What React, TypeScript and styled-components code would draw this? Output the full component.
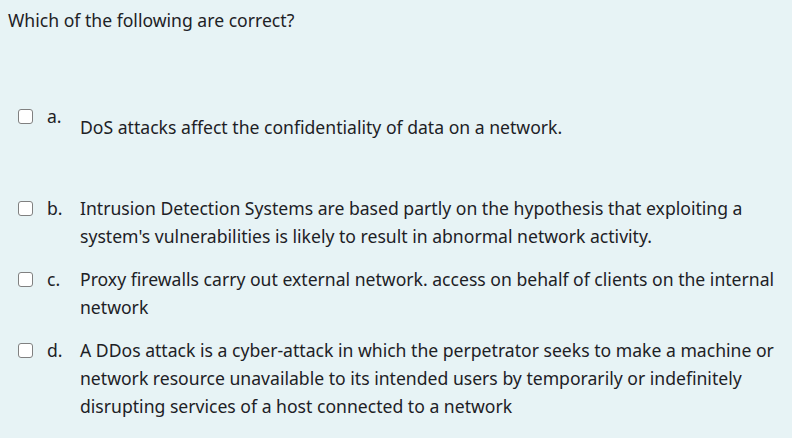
import React from "react";
import styled, { createGlobalStyle } from "styled-components";

const GlobalStyle = createGlobalStyle`
  html, body {
    margin: 0;
    padding: 0;
    background: #e7f3f5;
  }
  body {
    font-family: "Noto Sans", "Open Sans", sans-serif;
    font-size: 17.6px;
    color: #1d2125;
  }
`;

interface OptionType {
  letter: string;
  text: string;
  offset?: number;
}

const options: OptionType[] = [
  { letter: "a.", text: "DoS attacks affect the confidentiality of data on a network.", offset: 11 },
  {
    letter: "b.",
    text: "Intrusion Detection Systems are based partly on the hypothesis that exploiting a system's vulnerabilities is likely to result in abnormal network activity."
  },
  {
    letter: "c.",
    text: "Proxy firewalls carry out external network. access on behalf of clients on the internal network"
  },
  {
    letter: "d.",
    text: "A DDos attack is a cyber-attack in which the perpetrator seeks to make a machine or network resource unavailable to its intended users by temporarily or indefinitely disrupting services of a host connected to a network"
  }
];

const Page = styled.div`
  padding: 8px 8px 0 8px;
`;

const QuestionText = styled.div`
  line-height: 24px;
`;

const AnswerList = styled.div`
  display: flex;
  flex-direction: column;
  gap: 15px;
  margin-top: 70px;
  padding-left: 10px;
`;

const Row = styled.div`
  display: flex;
  align-items: flex-start;
  line-height: 28px;
`;

const Box = styled.span`
  flex: none;
  width: 15px;
  height: 15px;
  margin-top: 7px;
  box-sizing: border-box;
  border: 1.5px solid #808080;
  border-radius: 3px;
  background: #ffffff;
`;

const Letter = styled.span`
  flex: none;
  width: 33px;
  margin-left: 14px;
`;

const Text = styled.div<{ $offset: number }>`
  flex: 1;
  padding-top: ${props => props.$offset}px;
  padding-bottom: ${props => (props.$offset ? 38 : 0)}px;
  padding-right: 8px;
`;

export default function App() {
  return (
    <Page>
      <GlobalStyle />
      <QuestionText>Which of the following are correct?</QuestionText>
      <AnswerList>
        {options.map((el, idx) => (
          <Row key={idx.toString()}>
            <Box />
            <Letter>{el.letter}</Letter>
            <Text $offset={el.offset || 0}>{el.text}</Text>
          </Row>
        ))}
      </AnswerList>
    </Page>
  );
}
